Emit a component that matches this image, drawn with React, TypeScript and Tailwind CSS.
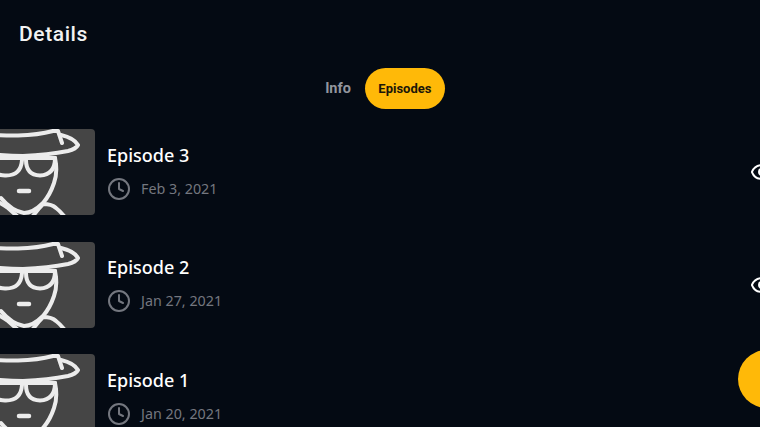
import { Clock, Eye } from "lucide-react";

const EPISODES = [
  { title: "Episode 3", date: "Feb 3, 2021", seen: true },
  { title: "Episode 2", date: "Jan 27, 2021", seen: true },
  { title: "Episode 1", date: "Jan 20, 2021", seen: false },
];

function SpyThumb() {
  return (
    <div className="h-[86px] w-[115px] shrink-0 overflow-hidden rounded-[4px] bg-[#454545]">
      <svg
        viewBox="-20 129 115 86"
        className="h-full w-full"
        fill="none"
        stroke="#ececec"
        strokeWidth="4"
        strokeLinecap="round"
        strokeLinejoin="round"
      >
        {/* hat */}
        <path d="M-20 133 Q0 136 18 135.5 Q38 135 53 131 L58 131 L62 143" />
        <path d="M61 135 Q74 138 78 145 Q76 149 68 151 Q48 155 23 156 Q5 156 -20 153" />
        {/* glasses */}
        <path d="M-20 158 H55" />
        <path d="M-12 158 Q-12 175 5 175.5 Q21 176 22 160 Q24 157 26 160 Q26 175 40 175.5 Q55 175 55 158" />
        {/* face */}
        <path d="M55 158 Q58 172 54 183 Q50 195 43 203 Q33 213 24 213 Q12 211 1 198" />
        <path d="M19 191 H29" strokeWidth="4.5" />
        {/* collar */}
        <path d="M-20 194 L-4 201 Q3 204 8 208 L17 216" />
        <path d="M33 216 Q38 209 43 204 Q52 204 56 208 Q60 211 64 216" />
      </svg>
    </div>
  );
}

function EpisodeRow({ title, date, seen }: { title: string; date: string; seen: boolean }) {
  return (
    <div className="flex h-[86px] items-center">
      <SpyThumb />
      <div className="ml-3 flex flex-col">
        <p className="-mt-[0.5px] text-[18px] leading-6 font-medium text-white">{title}</p>
        <div className="mt-[10px] flex items-center gap-[10px] text-[#74777f]">
          <Clock className="h-6 w-6" strokeWidth={2} />
          <span className="text-[14.3px] leading-6">{date}</span>
        </div>
      </div>
      {seen && <Eye className="ml-auto h-6 w-6 shrink-0 text-white" strokeWidth={2} />}
    </div>
  );
}

export default function App() {
  return (
    <div className="relative h-[427px] w-[760px] overflow-hidden bg-[#040a13] font-['Noto_Sans',sans-serif]">
      <h1 className="pt-[20px] pl-[19px] font-['Roboto',sans-serif] text-[21px] leading-7 font-medium tracking-[0.6px] text-[#f2f2f2]">
        Details
      </h1>
      <div className="mt-[20px] flex items-center justify-center gap-[14px] pl-[10px] font-['Roboto',sans-serif] text-[13px] font-bold">
        <span className="pt-px text-[14.5px] text-[#92959d]">Info</span>
        <span className="flex h-[41px] w-[80px] items-center justify-center rounded-full bg-[#ffb908] pt-px text-[#1c1608]">
          Episodes
        </span>
      </div>
      <div className="mt-5 -mr-[14px] -ml-5 flex flex-col gap-[26.5px]">
        {EPISODES.map((ep) => (
          <EpisodeRow key={ep.title} {...ep} />
        ))}
      </div>
      <div className="absolute top-[350px] left-[738px] h-[58px] w-[58px] rounded-full bg-[#ffb908]" />
    </div>
  );
}
